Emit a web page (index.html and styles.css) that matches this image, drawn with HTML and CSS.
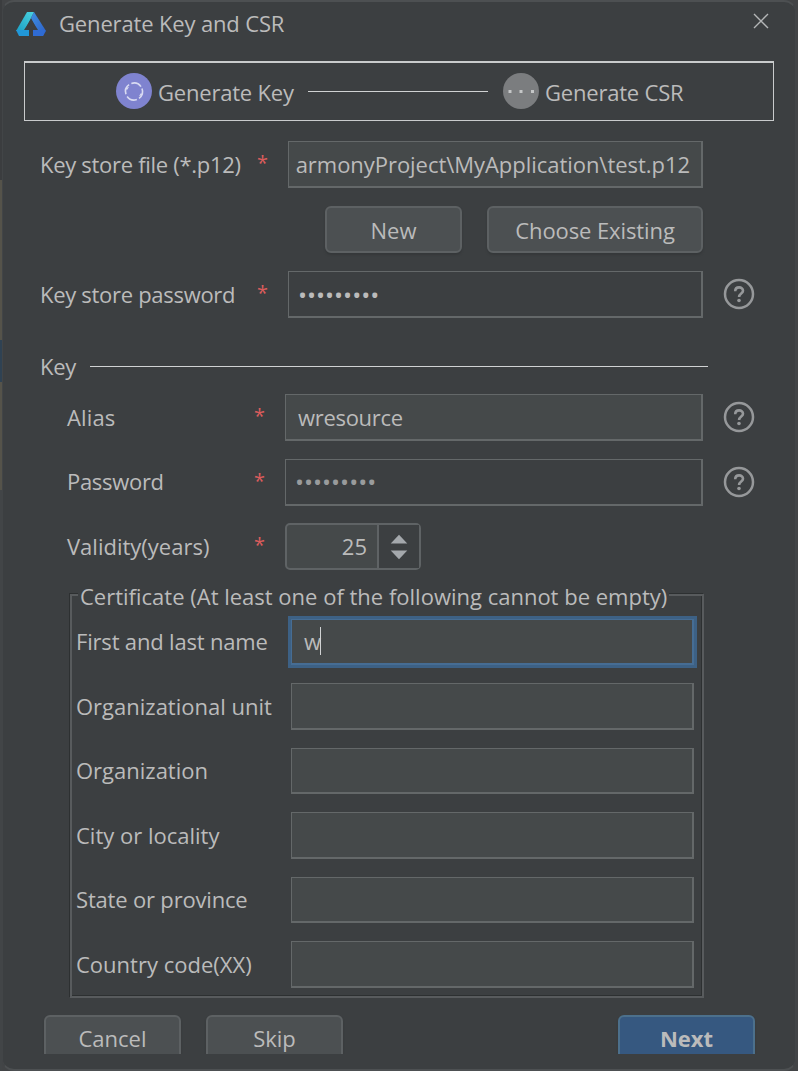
FILE: index.html
```
<!DOCTYPE html>
<html lang="en">
<head>
    <meta charset="UTF-8">
    <meta name="viewport" content="width=device-width, initial-scale=1.0">
    <title>Generate Key and CSR</title>
    <link rel="stylesheet" href="styles.css">
</head>
<body>
    <div class="dialog">
        <div class="titlebar">
            <svg class="logo" width="30" height="24" viewBox="0 0 30 24">
                <defs>
                    <linearGradient id="teal" x1="0" y1="1" x2="1" y2="0">
                        <stop offset="0" stop-color="#1b9fc4"/>
                        <stop offset="1" stop-color="#4ad3df"/>
                    </linearGradient>
                    <linearGradient id="blue" x1="0" y1="0" x2="1" y2="1">
                        <stop offset="0" stop-color="#3f8fe0"/>
                        <stop offset="1" stop-color="#2c5fc8"/>
                    </linearGradient>
                </defs>
                <path fill="url(#teal)" d="M11 0h7l-3 6-6 12-9 1z"/>
                <path fill="url(#blue)" d="M18 0l12 19-3 5-6-6-6-12z"/>
                <path fill="#2197d8" d="M0 18h13v6H3z"/>
                <path fill="#2f6bd3" d="M17 18h12.500l-2.500 6H17z"/>
                <path fill="#3c3f41" d="M15 7l7 11H8z"/>
            </svg>
            <span class="title">Generate Key and CSR</span>
            <svg class="close" width="16" height="16" viewBox="0 0 16 16">
                <path d="M1 1l14 14M15 1L1 15" stroke="#b4b6b7" stroke-width="1.4"/>
            </svg>
        </div>

        <div class="stepper">
            <svg class="step-icon" width="36" height="36" viewBox="0 0 36 36">
                <circle cx="18" cy="18" r="18" fill="#7f83cf"/>
                <circle cx="18" cy="18.500" r="8.500" fill="none" stroke="#d9dbf2" stroke-width="1.600" stroke-dasharray="10.800 2.550" transform="rotate(-20 18 18.500)"/>
                <path d="M9 15l4-1-2 3zM27 22l-4 1 2-3z" fill="#d9dbf2"/>
            </svg>
            <span class="step-name">Generate Key</span>
            <span class="step-line"></span>
            <svg class="step-icon" width="36" height="36" viewBox="0 0 36 36">
                <circle cx="18" cy="18" r="18" fill="#7b7d7f"/>
                <path d="M5.500 17h3v3h-3zM16.500 17h3v3h-3zM28 17h3v3h-3z" fill="#c5c7c8"/>
            </svg>
            <span class="step-name">Generate CSR</span>
        </div>

        <div class="row store-file">
            <label class="label tight">Key store file (*.p12)</label>
            <span class="star">*</span>
            <div class="field path">armonyProject\MyApplication\test.p12</div>
        </div>
        <div class="row choose">
            <button class="btn">New</button>
            <button class="btn wide">Choose Existing</button>
        </div>
        <div class="row store-pass">
            <label class="label tight">Key store password</label>
            <span class="star">*</span>
            <div class="field secret">•••••••••</div>
            <svg class="help" width="32" height="32" viewBox="0 0 32 32">
                <circle cx="16" cy="16" r="14" fill="none" stroke="#96989a" stroke-width="2.500"/>
                <path d="M12.200 13.200c0-5 7.800-5 7.800-.4 0 2.800-3.900 2.700-3.900 6.200" fill="none" stroke="#96989a" stroke-width="2.600"/>
                <circle cx="16" cy="22.500" r="1.800" fill="#96989a"/>
            </svg>
        </div>

        <div class="section">
            <span class="tight">Key</span>
            <span class="section-line"></span>
        </div>

        <div class="row key-row">
            <label class="label loose">Alias</label>
            <span class="star">*</span>
            <div class="field tight">wresource</div>
            <svg class="help" width="32" height="32" viewBox="0 0 32 32">
                <circle cx="16" cy="16" r="14" fill="none" stroke="#96989a" stroke-width="2.500"/>
                <path d="M12.200 13.200c0-5 7.800-5 7.800-.4 0 2.800-3.900 2.700-3.900 6.200" fill="none" stroke="#96989a" stroke-width="2.600"/>
                <circle cx="16" cy="22.500" r="1.800" fill="#96989a"/>
            </svg>
        </div>
        <div class="row key-row">
            <label class="label tight">Password</label>
            <span class="star">*</span>
            <div class="field secret dim">•••••••••</div>
            <svg class="help" width="32" height="32" viewBox="0 0 32 32">
                <circle cx="16" cy="16" r="14" fill="none" stroke="#96989a" stroke-width="2.500"/>
                <path d="M12.200 13.200c0-5 7.800-5 7.800-.4 0 2.800-3.900 2.700-3.900 6.200" fill="none" stroke="#96989a" stroke-width="2.600"/>
                <circle cx="16" cy="22.500" r="1.800" fill="#96989a"/>
            </svg>
        </div>
        <div class="row key-row">
            <label class="label">Validity(years)</label>
            <span class="star">*</span>
            <div class="spinner">
                <span class="years">25</span>
                <svg class="arrows" width="41" height="43" viewBox="0 0 41 43">
                    <path d="M12 18.500l8.500-9 8.500 9zM12 25.500l8.500 9 8.500-9z" fill="#a4a8ac"/>
                </svg>
            </div>
        </div>

        <fieldset class="cert">
            <legend>Certificate (At least one of the following cannot be empty)</legend>
            <div class="cert-row">
                <label class="label snug">First and last name</label>
                <div class="field focus">w<span class="caret"></span></div>
            </div>
            <div class="cert-row">
                <label class="label">Organizational unit</label>
                <div class="field"></div>
            </div>
            <div class="cert-row">
                <label class="label">Organization</label>
                <div class="field"></div>
            </div>
            <div class="cert-row">
                <label class="label">City or locality</label>
                <div class="field"></div>
            </div>
            <div class="cert-row">
                <label class="label snug">State or province</label>
                <div class="field"></div>
            </div>
            <div class="cert-row">
                <label class="label">Country code(XX)</label>
                <div class="field"></div>
            </div>
        </fieldset>

        <div class="footer">
            <button class="btn">Cancel</button>
            <button class="btn">Skip</button>
            <button class="btn next">Next</button>
        </div>
    </div>
</body>
</html>
```
FILE: styles.css
```
:root{
    --bg: #3c3f41;
    --field: #45494a;
    --line: #646869;
    --text: #bbbbbb;
}
*{
    padding: 0;
    margin: 0;
    box-sizing: border-box;
}
body{
    width: 798px;
    height: 1071px;
    overflow: hidden;
    padding: 0 2px 0 2px;
    background:
        linear-gradient(#3b3d3f 0 180px, #55534a 180px 340px, #2f4253 340px 382px, #55534a 382px 490px, #424547 490px) left / 2px 100% no-repeat,
        #424446;
    font-family: "Open Sans", "Noto Sans", sans-serif;
    font-size: 22px;
    line-height: 30px;
    color: var(--text);
}
.dialog{
    height: 1071px;
    border: 2px solid #4d5052;
    border-left: 1px solid #424547;
    border-right: 1px solid #424547;
    border-radius: 12px;
    background: var(--bg);
    white-space: nowrap;
}
.tight{
    letter-spacing: -0.3px;
}
.snug{
    letter-spacing: -0.18px;
}
.loose{
    letter-spacing: 0.15px;
}
.titlebar{
    display: flex;
    height: 59px;
    padding: 6px 26px 0 13px;
}
.logo{
    margin-top: 4px;
}
.title{
    margin-left: 13px;
    letter-spacing: -0.15px;
}
.close{
    margin: 5px 0 0 auto;
}

/* steps */
.stepper{
    display: flex;
    align-items: center;
    width: 750px;
    height: 60px;
    margin-left: 21px;
    padding-left: 91px;
    border: 1px solid #c9cbcc;
    border-top-width: 2px;
}
.step-icon{
    flex: none;
    margin-top: -1px;
}
.step-name{
    margin-left: 6px;
    padding-top: 1px;
    letter-spacing: -0.2px;
}
.step-line{
    width: 180px;
    height: 1px;
    margin: -1px 15px 0 auto;
    background: #d0d2d3;
}
.stepper .step-name:last-child{
    width: 228px;
}

/* form rows */
.row{
    display: flex;
    align-items: center;
    height: 47px;
    padding-left: 37px;
}
.label{
    width: 217px;
    padding-bottom: 2px;
}
.star{
    width: 31px;
    padding-bottom: 3px;
    color: #db5c5c;
    font-size: 20px;
}
.field{
    display: flex;
    align-items: center;
    width: 415px;
    height: 47px;
    padding: 0 12px 1px;
    border: 2px solid var(--line);
    border-top-width: 1px;
    border-left-width: 1px;
    background: var(--field);
}
.store-file{
    margin-top: 20px;
}
.path{
    justify-content: flex-end;
    padding: 0 11px 1px 8px;
    letter-spacing: -0.04px;
}
.secret{
    padding: 1px 9px 0;
    background: var(--bg);
    font-size: 24px;
}
.dim{
    color: #999b9c;
}
.help{
    margin: -1px 0 0 20px;
}
.choose{
    margin-top: 18px;
    padding-left: 322px;
    gap: 25px;
}
.btn{
    width: 137px;
    height: 47px;
    padding-top: 1px;
    border: 2px solid #5d6163;
    border-radius: 6px;
    background: #4c5052;
    box-shadow: 0 2px 2px #35383a;
    color: var(--text);
    font: inherit;
}
.wide{
    width: 216px;
    letter-spacing: -0.1px;
}
.store-pass{
    margin-top: 18px;
}
.section{
    display: flex;
    align-items: center;
    height: 30px;
    margin: 33px 0 13px 37px;
}
.section-line{
    width: 618px;
    height: 1px;
    margin-left: 14px;
    background: #d0d2d3;
}
.key-row{
    margin-bottom: 17.500px;
    padding-left: 64px;
}
.key-row .label{
    width: 187px;
}
.key-row .field{
    width: 418px;
}
.spinner{
    display: flex;
    width: 136px;
    height: 47px;
    border: 2px solid #5f6365;
    border-radius: 5px;
    background: var(--field);
}
.years{
    width: 92px;
    padding: 6px 10px 0 0;
    border-right: 2px solid #5f6365;
    text-align: right;
}
.arrows{
    flex: 1;
    background: var(--bg);
}

/* certificate group */
.cert{
    width: 634px;
    height: 417px;
    margin: -7px 0 0 67px;
    padding-top: 10px;
    border: 2px solid #585b5d;
    box-shadow: -1px -1px 0 #2d3031, inset -1px -1px 0 #2d3031;
}
.cert legend{
    height: 28px;
    margin-left: 6px;
    padding: 0 2px;
    background: var(--bg);
}
.cert-row{
    display: flex;
    align-items: center;
    height: 46.500px;
    margin-bottom: 18px;
    padding-left: 4px;
}
.cert-row .label{
    width: 215px;
    padding-bottom: 1px;
}
.cert-row .field{
    width: 403px;
    height: 46.500px;
}
.cert-row .focus{
    border-color: #466d94;
    box-shadow: 0 0 0 3px #3d6185;
}
.caret{
    width: 1px;
    height: 28px;
    margin-left: -1px;
    background: #d0d2d3;
}

.footer{
    display: flex;
    gap: 25px;
    height: 39px;
    margin-top: 17px;
    padding: 0 40px 0 41px;
    overflow: hidden;
}
.footer .btn{
    padding-top: 0;
}
.footer .next{
    margin-left: auto;
    border-color: #4c708c;
    background: #365880;
    font-weight: bold;
}
```
